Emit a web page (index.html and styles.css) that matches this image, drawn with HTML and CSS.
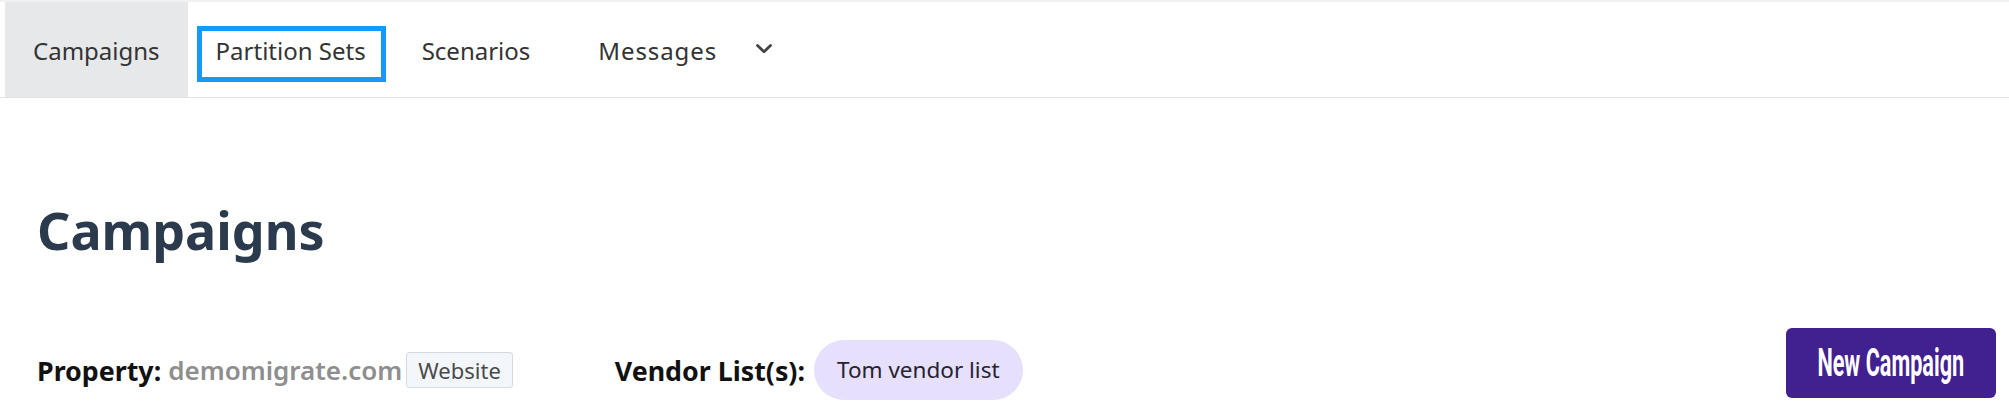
FILE: index.html
```html
<!DOCTYPE html>
<html lang="en">
<head>
  <meta charset="UTF-8" />
  <meta name="viewport" content="width=device-width, initial-scale=1.0"/>
  <title>Campaigns</title>
  <link rel="stylesheet" href="styles.css">
</head>
<body>

  <nav class="tabs">
    <a class="tab active">Campaigns</a>
    <a class="tab focused">Partition Sets</a>
    <a class="tab">Scenarios</a>
    <a class="tab dropdown">Messages</a>
    <span class="more">
      <svg width="16" height="10" viewBox="0 0 16 10">
        <polyline points="1.5,1.5 8,7.8 14.5,1.5" fill="none" stroke="#444" stroke-width="2.8" stroke-linecap="round" stroke-linejoin="round"/>
      </svg>
    </span>
  </nav>

  <main class="content">
    <h1>Campaigns</h1>

    <div class="info-row">
      <div class="info">
        <span class="label">Property:</span>
        <span class="property">demomigrate.com</span>
        <span class="badge">Website</span>
      </div>
      <div class="info vendor">
        <span class="label">Vendor List(s):</span>
        <span class="pill">Tom vendor list</span>
      </div>
      <button class="new-btn"><span>New Campaign</span></button>
    </div>
  </main>

</body>
</html>
```

FILE: styles.css
```css
body {
  margin: 0;
  font-family: "Noto Sans", "Open Sans", sans-serif;
  background-color: white;
  overflow: hidden;
}

.tabs {
  display: flex;
  border-top: 2px solid #f1f1f1;
  border-bottom: 1px solid #e2e2e2;
  padding-left: 5px;
  height: 95px;
}

.tab {
  display: flex;
  align-items: center;
  position: relative;
  padding: 3px 28px 0;
  font-size: 24px;
  line-height: 32px;
  color: #333;
  cursor: pointer;
}

.tab.active {
  background-color: #e7e8ea;
}

.tab.dropdown {
  padding-left: 40px;
  letter-spacing: 0.9px;
}

/* keyboard focus ring on the second tab */
.tab.focused::after {
  content: "";
  position: absolute;
  left: 9px;
  right: 8px;
  top: 24px;
  bottom: 15px;
  border: 5px solid #1499ff;
}

.more {
  display: flex;
  align-items: center;
  margin-left: 11px;
  padding-bottom: 1px;
}

.content {
  padding: 0 13px 0 37px;
}

h1 {
  margin: 101px 0 0;
  font-size: 52px;
  line-height: 62px;
  font-weight: 700;
  color: #2b3a4d;
}

.info-row {
  display: flex;
  align-items: center;
  margin-top: 67px;
}

.info {
  display: flex;
  align-items: center;
  font-size: 26px;
}

.info.vendor {
  margin-left: 102px;
}

.label {
  font-size: 26.8px;
  font-weight: 700;
  color: #111;
}

.property {
  margin-left: 7px;
  font-weight: 600;
  color: #8e8e8e;
}

.badge {
  margin-left: 4px;
  padding: 0 11px;
  height: 34px;
  line-height: 34px;
  font-size: 22px;
  color: #4a4a4a;
  background-color: #f3f6fa;
  border: 1px solid #d5dae0;
  border-radius: 3px;
}

.pill {
  margin-left: 9px;
  padding: 0 23px;
  height: 60px;
  line-height: 60px;
  font-size: 22.5px;
  color: #26232f;
  background-color: #e7e0fd;
  border-radius: 30px;
}

.new-btn {
  display: flex;
  align-items: center;
  justify-content: center;
  margin-left: auto;
  margin-bottom: 14px;
  width: 210px;
  height: 70px;
  border: none;
  border-radius: 6px;
  background-color: #41208f;
  color: white;
  font-family: "Roboto", "Noto Sans", sans-serif;
  font-size: 38px;
  font-weight: 700;
  cursor: pointer;
  overflow: hidden;
}

.new-btn span {
  flex-shrink: 0;
  transform: scaleX(0.57);
  white-space: nowrap;
}
```
